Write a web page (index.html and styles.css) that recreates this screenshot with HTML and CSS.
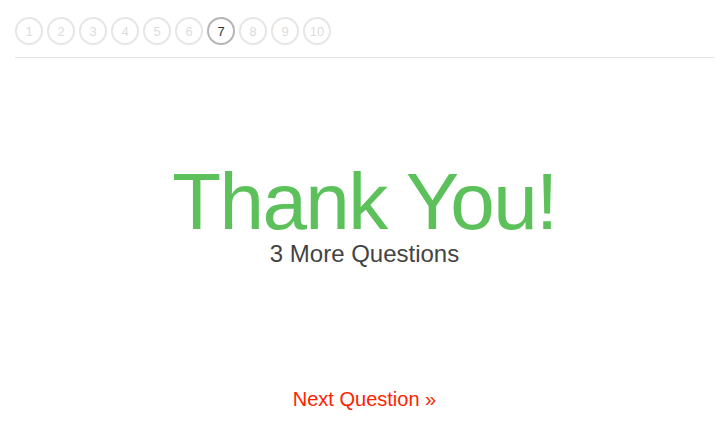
FILE: index.html
```html
<!DOCTYPE html>
<html>
<head>
<meta charset="utf-8">
<link rel="stylesheet" href="styles.css">
</head>
<body>
<div class="page">
  <div class="steps">
    <span class="step">1</span>
    <span class="step">2</span>
    <span class="step">3</span>
    <span class="step">4</span>
    <span class="step">5</span>
    <span class="step">6</span>
    <span class="step current">7</span>
    <span class="step">8</span>
    <span class="step">9</span>
    <span class="step">10</span>
  </div>
  <div class="thanks">
    <h1 class="title">Thank You!</h1>
    <p class="sub">3 More Questions</p>
  </div>
  <div class="next">
    <a class="next-link" href="#">Next Question »</a>
  </div>
</div>
</body>
</html>
```

FILE: styles.css
```css
html, body {
  margin: 0;
  padding: 0;
  background: #fff;
  font-family: "Liberation Sans", Arial, sans-serif;
}
.page {
  margin: 0 12px 0 15px;
}
.steps {
  display: flex;
  gap: 4px;
  padding: 17px 0 12px;
  border-bottom: 1px solid #e3e3e3;
}
.step {
  box-sizing: border-box;
  width: 28px;
  height: 28px;
  border: 2px solid #e6e6e6;
  border-radius: 50%;
  display: flex;
  align-items: center;
  justify-content: center;
  font-size: 13px;
  color: #dcdcdc;
}
.step.current {
  border-color: #b5b5b5;
  color: #333;
}
.thanks {
  text-align: center;
  padding-top: 104px;
}
.title {
  margin: 0;
  font-weight: normal;
  font-size: 80px;
  line-height: 80px;
  letter-spacing: -1.6px;
  color: #5cc15b;
}
.sub {
  margin: 0;
  font-size: 24px;
  line-height: 24px;
  color: #444;
}
.next {
  text-align: center;
  padding-top: 123px;
  line-height: 20px;
}
.next-link {
  font-size: 20px;
  color: #ff2200;
  text-decoration: none;
}
```
